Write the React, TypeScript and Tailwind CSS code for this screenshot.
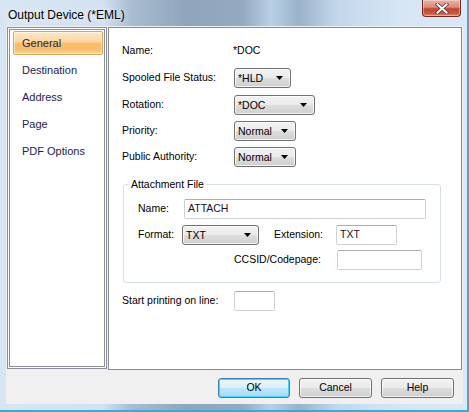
import React from "react";

const font = { fontFamily: '"Liberation Sans", Arial, sans-serif' };

function Combo({ w, text }: { w: string; text: string }) {
  return (
    <div
      className={`${w} h-[20px] rounded-[3px] border border-[#707070] bg-[linear-gradient(#f2f2f2_0%,#ebebeb_48%,#dddddd_52%,#cfcfcf_100%)] shadow-[inset_0_0_0_1px_rgba(255,255,255,0.75)] flex items-center justify-between pl-[3px] pr-[7px] text-[10.5px] text-black`}
    >
      <span className="leading-none">{text}</span>
      <svg width="7" height="4" viewBox="0 0 7 4">
        <path d="M0 0h7L3.5 4z" fill="#000" />
      </svg>
    </div>
  );
}

function TextBox({ w, text }: { w: string; text?: string }) {
  return (
    <div
      className={`${w} h-[20px] bg-white border border-[#cdd2d8] border-t-[#abadb3] rounded-[2px] flex items-center pl-[3px] text-[10.5px] text-[#1a1028]`}
    >
      {text}
    </div>
  );
}

function Btn({ label, def }: { label: string; def?: boolean }) {
  return (
    <div
      className={
        def
          ? "w-[72px] h-[20px] rounded-[3px] border border-[#3c7fb1] bg-[linear-gradient(#eaf6fd_0%,#d9f0fc_48%,#bee6fd_52%,#a7d9f5_100%)] shadow-[inset_0_0_0_1px_#48d6f4] flex items-center justify-center text-[10.5px] text-black"
          : "w-[73px] h-[20px] rounded-[3px] border border-[#707070] bg-[linear-gradient(#f2f2f2_0%,#ebebeb_48%,#dddddd_52%,#cfcfcf_100%)] shadow-[inset_0_0_0_1px_rgba(255,255,255,0.75)] flex items-center justify-center text-[10.5px] text-black"
      }
    >
      {label}
    </div>
  );
}

export default function App() {
  const nav = ["General", "Destination", "Address", "Page", "PDF Options"];
  return (
    <div
      style={font}
      className="w-[469px] h-[412px] overflow-hidden flex flex-col bg-[linear-gradient(90deg,#d8e6f4_0%,#d2e2f2_22%,#aabdd1_28%,#8fa5bc_40%,#94aac1_52%,#b9d0e6_58%,#9ab2ca_64%,#c3d7eb_72%,#d7e6f5_86%,#dbe8f6_100%)] border-r-[2px] border-r-[#3fa9d6]"
    >
      {/* Title bar */}
      <div className="h-[26px] flex justify-between shrink-0">
        <div className="pl-[8px] pt-[3px] flex items-center text-[12px] text-black [text-shadow:0_0_6px_rgba(255,255,255,0.9)]">
          Output Device (*EML)
        </div>
        <div className="mr-[6px] w-[39px] h-[17px] rounded-b-[4px] border border-t-0 border-[#6e2a1f] bg-[linear-gradient(#eab1a4_0%,#d98a78_45%,#c4452d_55%,#c95a42_85%,#e28f70_100%)] shadow-[inset_0_0_0_1px_rgba(255,255,255,0.35)] flex items-center justify-center">
          <svg width="14" height="11" viewBox="0 0 14 11">
            <path
              d="M2.5 1.5L11.5 9.5M11.5 1.5L2.5 9.5"
              stroke="#5a3a36"
              strokeWidth="3.6"
              strokeLinecap="square"
            />
            <path
              d="M2.5 1.5L11.5 9.5M11.5 1.5L2.5 9.5"
              stroke="#ffffff"
              strokeWidth="2"
              strokeLinecap="square"
            />
          </svg>
        </div>
      </div>

      {/* Client area */}
      <div className="ml-[6px] w-[457px] h-[378px] bg-[#f0f0f0] flex flex-col shrink-0">
        <div className="flex items-start pt-[1px] pl-[1px] gap-[1px]">
          {/* Left nav */}
          <div className="w-[100px] h-[342px] border border-[#8a8f99] bg-white">
            <div className="h-full border border-white">
              <div className="h-full border border-[#8a8f99] bg-white flex flex-col gap-[3px] pt-[1px] pl-[3px]">
                {nav.map((n, i) => (
                  <div
                    key={n}
                    className={
                      i === 0
                        ? "w-[90px] h-[24px] border border-[#d9a45e] rounded-[2px] bg-[linear-gradient(#fde9c8_0%,#fbd8a4_42%,#f8bb64_55%,#f8c070_82%,#fcd597_100%)] shadow-[inset_0_0_0_1px_rgba(255,255,255,0.5)] flex items-center pl-[8px] text-[11px] text-[#241c55]"
                        : "w-[90px] h-[24px] flex items-center pl-[9px] text-[11px] text-[#241c50]"
                    }
                  >
                    {n}
                  </div>
                ))}
              </div>
            </div>
          </div>

          {/* Right panel */}
          <div className="w-[354px] h-[343px] border border-[#898c95] bg-white flex flex-col pl-[13px] pt-[13px] text-[10.5px] text-black">
            <div className="h-[19px] flex items-center">
              <div className="w-[111px]">Name:</div>
              <div>*DOC</div>
            </div>
            <div className="mt-[8px] flex items-center">
              <div className="w-[112px]">Spooled File Status:</div>
              <Combo w="w-[57px]" text="*HLD" />
            </div>
            <div className="mt-[7px] flex items-center">
              <div className="w-[112px]">Rotation:</div>
              <Combo w="w-[81px]" text="*DOC" />
            </div>
            <div className="mt-[6px] flex items-center">
              <div className="w-[112px]">Priority:</div>
              <Combo w="w-[62px]" text="Normal" />
            </div>
            <div className="mt-[6px] flex items-center">
              <div className="w-[112px]">Public Authority:</div>
              <Combo w="w-[62px]" text="Normal" />
            </div>

            <fieldset className="mt-[11px] ml-[1px] w-[318px] border border-[#d5dfe5] rounded-[3px] pl-[14px] pt-[8px] pb-[12px]">
              <legend className="-ml-[9px] px-[2px] leading-[13px] text-black">
                Attachment File
              </legend>
              <div className="flex items-center">
                <div className="w-[46px]">Name:</div>
                <TextBox w="w-[242px]" text="ATTACH" />
              </div>
              <div className="mt-[6px] flex items-center">
                <div className="w-[44px]">Format:</div>
                <Combo w="w-[77px]" text="TXT" />
                <div className="ml-[15px] w-[62px]">Extension:</div>
                <TextBox w="w-[61px]" text="TXT" />
              </div>
              <div className="mt-[5px] flex items-center">
                <div className="ml-[96px] w-[103px]">CCSID/Codepage:</div>
                <TextBox w="w-[85px]" />
              </div>
            </fieldset>

            <div className="mt-[8px] flex items-center">
              <div className="w-[112px]">Start printing on line:</div>
              <TextBox w="w-[41px]" />
            </div>
          </div>
        </div>

        {/* Footer */}
        <div className="flex justify-end gap-[9px] pt-[8px] pr-[9px]">
          <Btn label="OK" def />
          <Btn label="Cancel" />
          <Btn label="Help" />
        </div>
      </div>
      <div className="flex-1 border-b-[2px] border-b-[#3fa9d6]" />
    </div>
  );
}
